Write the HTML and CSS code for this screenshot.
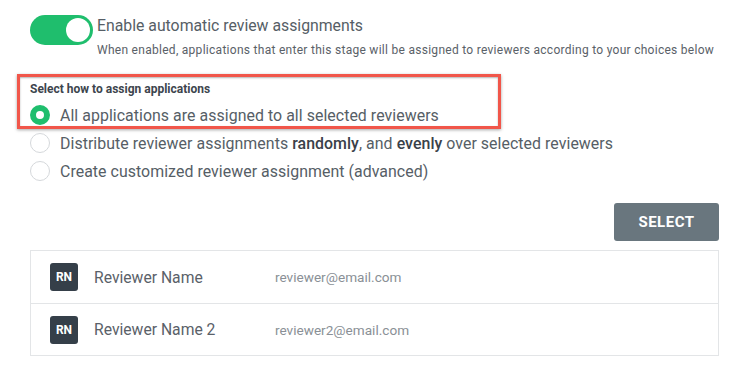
FILE: index.html
```html
<!DOCTYPE html>
<html>
<head>
<meta charset="utf-8">
<link rel="stylesheet" href="styles.css">
</head>
<body>
<div class="page">
  <div class="toggle-row">
    <div class="toggle"><div class="knob"></div></div>
    <div class="toggle-text">
      <div class="toggle-title">Enable automatic review assignments</div>
      <div class="toggle-sub">When enabled, applications that enter this stage will be assigned to reviewers according to your choices below</div>
    </div>
  </div>

  <div class="highlight">
    <div class="group-label">Select how to assign applications</div>
    <div class="radio-row first">
      <span class="radio checked"></span>
      <span class="radio-label">All applications are assigned to all selected reviewers</span>
    </div>
  </div>
  <div class="radio-row">
    <span class="radio"></span>
    <span class="radio-label">Distribute reviewer assignments <b>randomly</b>, and <b>evenly</b> over selected reviewers</span>
  </div>
  <div class="radio-row">
    <span class="radio"></span>
    <span class="radio-label">Create customized reviewer assignment (advanced)</span>
  </div>

  <div class="actions">
    <button class="select-btn">SELECT</button>
  </div>

  <div class="list">
    <div class="list-row">
      <span class="avatar">RN</span>
      <span class="name">Reviewer Name</span>
      <span class="email">reviewer@email.com</span>
    </div>
    <div class="list-row">
      <span class="avatar">RN</span>
      <span class="name">Reviewer Name 2</span>
      <span class="email">reviewer2@email.com</span>
    </div>
  </div>
</div>
</body>
</html>
```

FILE: styles.css
```css
* { box-sizing: border-box; }
body {
  margin: 0;
  background: #ffffff;
  font-family: Roboto, "Liberation Sans", sans-serif;
  color: #565e66;
}
.page {
  padding: 15px 31px 0 30px;
}
.toggle-row {
  display: flex;
  align-items: flex-start;
  gap: 4px;
}
.toggle {
  width: 63px;
  height: 30px;
  border-radius: 15px;
  background: #1fbe6d;
  position: relative;
  flex: none;
}
.knob {
  position: absolute;
  right: 3px;
  top: 3px;
  width: 24px;
  height: 24px;
  border-radius: 50%;
  background: #fff;
}
.toggle-title {
  font-size: 15.8px;
  line-height: 20px;
  margin-top: 1px;
}
.toggle-sub {
  font-size: 12px;
  letter-spacing: 0.28px;
  line-height: 16px;
  margin-top: 6px;
  color: #5a6168;
  white-space: nowrap;
}
.highlight {
  margin: 16px 0 0 -13px;
  width: 484px;
  border: 3px solid #f1564a;
  box-shadow: 0 1px 3px rgba(0,0,0,0.35), inset 0 1px 2px rgba(0,0,0,0.3);
  padding: 4px 10px 0 10px;
}
.group-label {
  font-size: 12px;
  font-weight: bold;
  color: #3d454d;
  line-height: 16px;
  margin-bottom: 7px;
}
.radio-row {
  display: flex;
  align-items: center;
  gap: 10px;
  height: 28px;
}
.radio-row.first {
  height: 22px;
}
.radio {
  width: 20px;
  height: 20px;
  border-radius: 50%;
  border: 1px solid #d5d8db;
  background: #fff;
  flex: none;
}
.radio.checked {
  border: 6px solid #1fbe6d;
}
.radio-label {
  font-size: 15.9px;
  letter-spacing: 0.05px;
  color: #565e66;
}
.radio-label b {
  color: #3a4149;
  font-weight: 500;
}
.actions {
  display: flex;
  justify-content: flex-end;
  margin-top: 18px;
}
.select-btn {
  width: 105px;
  height: 38px;
  background: #69767e;
  color: #fff;
  border: none;
  border-radius: 3px;
  font-family: inherit;
  font-size: 15px;
  font-weight: bold;
  letter-spacing: 0.5px;
}
.list {
  margin-top: 9px;
  border: 1px solid #e3e5e7;
}
.list-row {
  display: flex;
  align-items: center;
  height: 52px;
  padding-left: 19px;
}
.list-row + .list-row {
  border-top: 1px solid #e3e5e7;
}
.avatar {
  width: 28px;
  height: 28px;
  border-radius: 3px;
  background: #353f49;
  color: #fff;
  font-size: 12px;
  font-weight: bold;
  display: flex;
  align-items: center;
  justify-content: center;
  flex: none;
}
.name {
  margin-left: 16px;
  width: 181px;
  font-size: 15.7px;
  color: #5a6169;
}
.email {
  font-size: 13.6px;
  color: #8a9096;
}
```
